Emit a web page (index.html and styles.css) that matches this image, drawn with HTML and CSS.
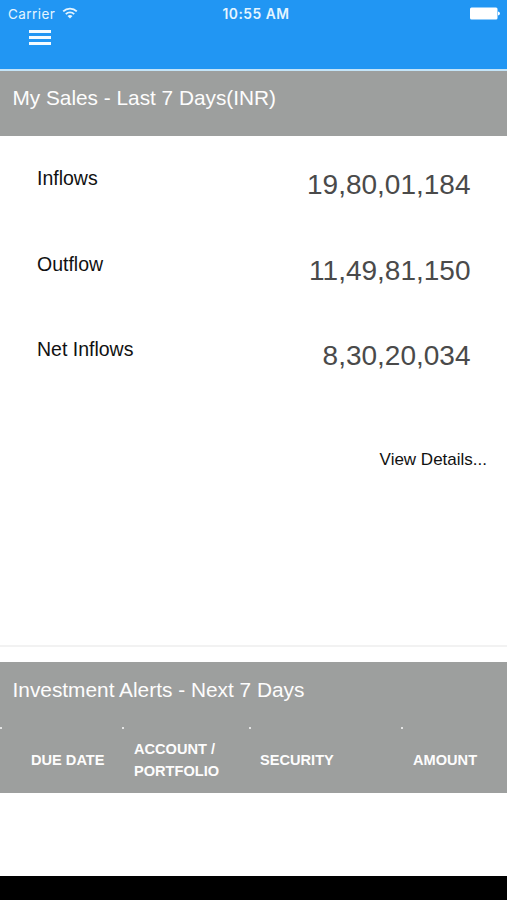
FILE: index.html
```html
<!DOCTYPE html>
<html lang="en">

<head>
  <meta charset="utf-8">
  <title>My Sales</title>
  <link rel="stylesheet" href="styles.css">
</head>

<body>
<div class="topbar">
  <div class="status">
    <div class="carrier">
      <span>Carrier</span>
      <svg class="wifi" width="16" height="12" viewBox="0 0 16 12">
        <path d="M1.2 4.4 A9.6 9.6 0 0 1 14.8 4.4" />
        <path d="M3.8 7.1 A5.9 5.9 0 0 1 12.2 7.1" />
        <path class="dot" d="M8 11.6 L5.5 9.1 A3.6 3.6 0 0 1 10.5 9.1 Z" />
      </svg>
    </div>
    <div class="clock">10:55 AM</div>
    <svg class="battery" width="31" height="13" viewBox="0 0 31 13">
      <rect x="0" y="0.5" width="27.5" height="12" rx="1.5" />
      <path d="M28 4.5 Q30 4.8 30 6.5 Q30 8.2 28 8.5 Z" />
    </svg>
  </div>
  <div class="menu">
    <span></span>
    <span></span>
    <span></span>
  </div>
</div>

<div class="panel sales">
  <h2>My Sales - Last 7 Days(INR)</h2>
  <div class="figures">
    <div class="row"><span class="label">Inflows</span><span class="value">19,80,01,184</span></div>
    <div class="row"><span class="label">Outflow</span><span class="value">11,49,81,150</span></div>
    <div class="row"><span class="label">Net Inflows</span><span class="value">8,30,20,034</span></div>
  </div>
  <a class="details">View Details...</a>
</div>

<div class="panel alerts">
  <h2>Investment Alerts - Next 7 Days</h2>
  <table>
    <tr>
      <th class="due"><span>DUE DATE</span></th>
      <th class="account"><span>ACCOUNT /</span><br><span>PORTFOLIO</span></th>
      <th class="security"><span>SECURITY</span></th>
      <th class="amount"><span>AMOUNT</span></th>
    </tr>
  </table>
</div>

<div class="bottom"></div>
</body>

</html>
```

FILE: styles.css
```css
body { background: white; display: flex; flex-direction: column; font-family: "Liberation Sans", Arial, sans-serif; height: 900px; margin: 0; overflow: hidden; padding: 0 }
h2 { color: #fdfdfd; font-size: 20.8px; font-weight: normal; line-height: 24px; margin: 0; white-space: nowrap }

/* Top bar */

.topbar { background: #2196f3; border-bottom: 2px solid #c3e4f8; box-sizing: border-box; flex: none; height: 71px }
.status { align-items: center; color: #e4f5ff; display: grid; font-family: Inter, sans-serif; grid-template-columns: 1fr auto 1fr; height: 27px; padding: 0 6px 0 8px }
.carrier { align-items: center; display: flex; font-size: 13.5px; gap: 6.5px; letter-spacing: 0.45px }
.clock { font-size: 13.8px; font-weight: 600; letter-spacing: 0.5px; margin-left: 3px }
.wifi { fill: none; margin-bottom: 2px; stroke: #e4f5ff; stroke-width: 1.8 }
.wifi .dot { fill: #e4f5ff; stroke: none }
.battery { fill: white; justify-self: end }
.menu { display: flex; flex-direction: column; gap: 3px; margin: 3px 0 0 29px; width: 22px }
.menu span { background: #f4fbff; height: 3px }

/* Panels */

.panel { flex: none }
.sales { border-bottom: 2px solid #f2f2f2; box-sizing: border-box; height: 576px; margin-bottom: 15px }
.sales h2 { background: #9d9f9e; box-sizing: border-box; height: 64.5px; padding: 15px 12.5px }
.figures { padding: 27.6px 36.5px 0 37px }
.row { display: flex; height: 85.5px; justify-content: space-between }
.label { color: #111; font-size: 19.5px; line-height: 30px }
.value { color: #4a4a4a; font-size: 28px; line-height: 44px }
.details { color: #111; display: block; font-size: 17px; line-height: 24px; margin: 28.4px 20px 0; text-align: right }

.alerts { background: #9d9f9e; height: 130.5px }
.alerts h2 { font-size: 20.85px; height: 49px; padding: 16px 12.5px 0 }
.alerts table { border-spacing: 0; color: #fdfdfd; height: 65px; table-layout: fixed; width: 507px }
.alerts th { font-size: 14.6px; line-height: 22px; padding: 0; position: relative; text-align: left }
.alerts th.due { padding-left: 31px; width: 91px }
.alerts th.account { padding-left: 12px; width: 115px }
.alerts th.security { padding-left: 11px; width: 141px }
.alerts th.amount { padding-left: 12px }

/* Light dots at the cell corners */

.alerts th::before { background: #e4e4e4; content: ""; height: 1.5px; left: 0; position: absolute; top: 0; width: 2px }

/* Bottom bar */

.bottom { background: black; height: 24px; margin-top: auto }
```
